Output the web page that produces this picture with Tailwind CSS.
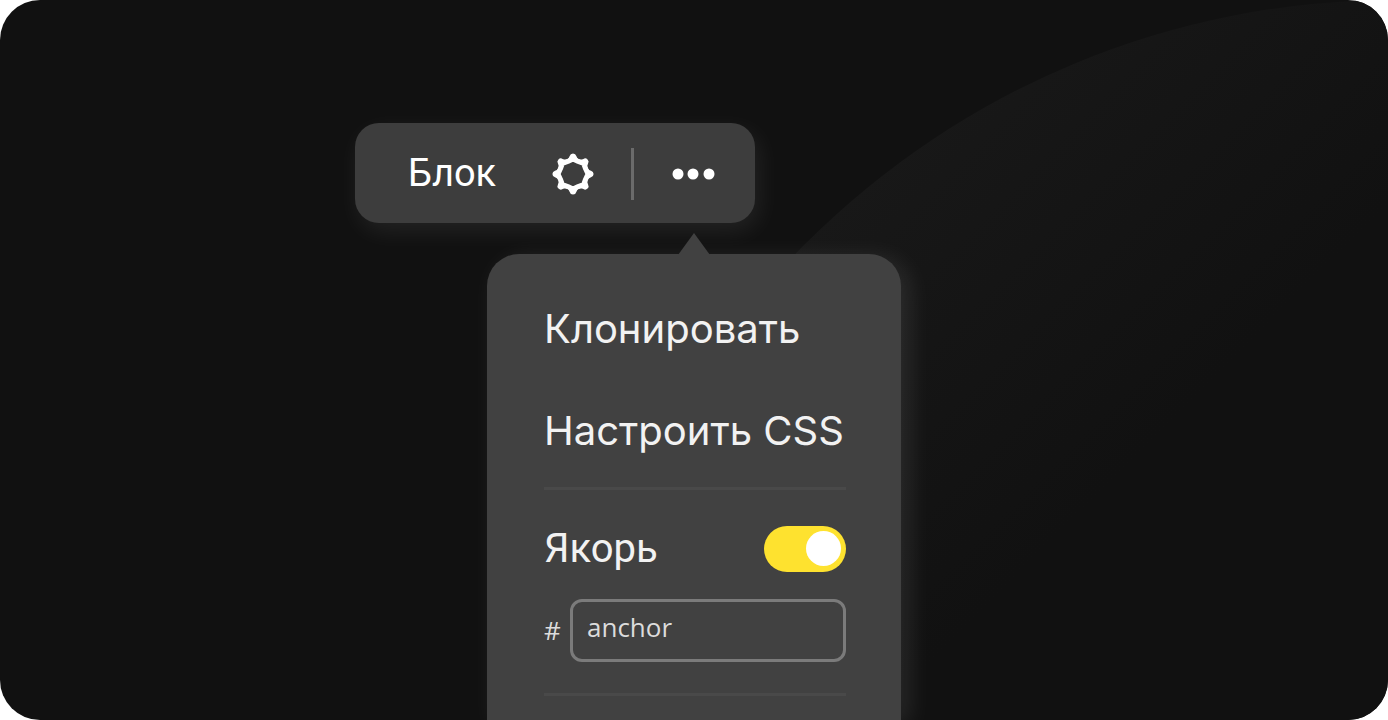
<!DOCTYPE html>
<html lang="ru">
<head>
  <meta charset="UTF-8">
  <meta name="viewport" content="width=device-width, initial-scale=1.0">
  <title>Блок</title>
  <script src="https://cdn.jsdelivr.net/npm/@tailwindcss/browser@4"></script>
</head>
<body class="bg-white">
  <main class="relative flex h-screen justify-center overflow-hidden rounded-[40px] bg-[#111111] pt-[123px] text-white">
    <!-- Background glow -->
    <div class="absolute top-0 left-[calc(50%-131px)] h-[1660px] w-[1660px] rounded-full bg-[linear-gradient(135deg,#191919_12%,#111111_31%)]"></div>

    <div class="relative flex w-[678px] flex-col">
      <!-- Block toolbar -->
      <div class="flex h-[100px] w-[400px] shrink-0 items-center rounded-3xl bg-[#3d3d3d] pt-px pl-[53px] shadow-[4px_8px_24px_rgba(255,255,255,0.08)]">
        <span class="w-[143px] font-[Roboto,sans-serif] text-[38px]">Блок</span>
        <button type="button" aria-label="Настройки блока" class="shrink-0">
          <svg class="h-11 w-11" viewBox="-22 -22 44 44" fill="#ffffff">
            <path fill="none" stroke="#ffffff" stroke-width="5" stroke-linejoin="round" d="M0-15 L5.200-12.600 L10.600-10.600 L12.600-5.200 L15 0 L12.600 5.200 L10.600 10.600 L5.200 12.600 L0 15 L-5.200 12.600 L-10.600 10.600 L-12.600 5.200 L-15 0 L-12.600-5.200 L-10.600-10.600 L-5.200-12.600Z" />
            <path id="tooth" d="M-6.500-14 Q-4-15.500-3.300-18 A3.400 3.400 0 0 1 3.300-18 Q4-15.500 6.500-14Z" />
            <use href="#tooth" transform="rotate(45)" />
            <use href="#tooth" transform="rotate(90)" />
            <use href="#tooth" transform="rotate(135)" />
            <use href="#tooth" transform="rotate(180)" />
            <use href="#tooth" transform="rotate(225)" />
            <use href="#tooth" transform="rotate(270)" />
            <use href="#tooth" transform="rotate(315)" />
          </svg>
        </button>
        <div class="ml-9 h-[52px] w-[3px] bg-[#6b6b6b]"></div>
        <button type="button" aria-label="Ещё" class="ml-9 shrink-0">
          <svg class="h-11 w-12" viewBox="0 0 48 44" fill="#ffffff">
            <circle cx="8" cy="22" r="5.500" />
            <circle cx="23" cy="22" r="5.500" />
            <circle cx="39" cy="22" r="5.500" />
          </svg>
        </button>
      </div>

      <!-- Dropdown -->
      <div class="relative mt-[31px] w-[414px] flex-1 self-center rounded-t-[32px] bg-[#414141] pt-6 pr-[55px] pl-[57px] text-[#f2f2f2] shadow-[8px_4px_24px_rgba(255,255,255,0.10)]">
        <svg class="absolute -top-[21px] left-1/2 h-[22px] w-8 -translate-x-1/2" viewBox="0 0 32 22" fill="#414141">
          <path d="M16 0 L32 22 H0Z" />
        </svg>

        <button type="button" class="block h-[102px] w-full text-left font-[Inter,sans-serif] text-[40px] whitespace-nowrap">Клонировать</button>
        <button type="button" class="block h-[102px] w-full text-left font-[Inter,sans-serif] text-[40px] whitespace-nowrap">Настроить CSS</button>

        <hr class="mt-[5px] border-t-3 border-[#494949]">

        <div class="mt-9 flex h-[46px] items-center justify-between">
          <label for="anchor-on" class="font-[Roboto,sans-serif] text-[40px]">Якорь</label>
          <input id="anchor-on" type="checkbox" checked class="relative h-[46px] w-[82px] appearance-none rounded-full bg-[#fee22f] before:absolute before:top-[5px] before:left-1.5 before:h-[35px] before:w-[35px] before:rounded-full before:bg-white before:content-[''] checked:before:left-[42px]">
        </div>

        <div class="mt-[27px] flex items-center justify-between font-[Open_Sans,sans-serif] text-[26px] text-[#dcdcdc]">
          <label for="anchor-name">#</label>
          <input id="anchor-name" type="text" value="anchor" class="h-[63px] w-[276px] rounded-xl border-3 border-[#7b7b7b] px-3.5 pb-2">
        </div>

        <hr class="mt-[31px] border-t-3 border-[#494949]">
      </div>
    </div>
  </main>
</body>
</html>
